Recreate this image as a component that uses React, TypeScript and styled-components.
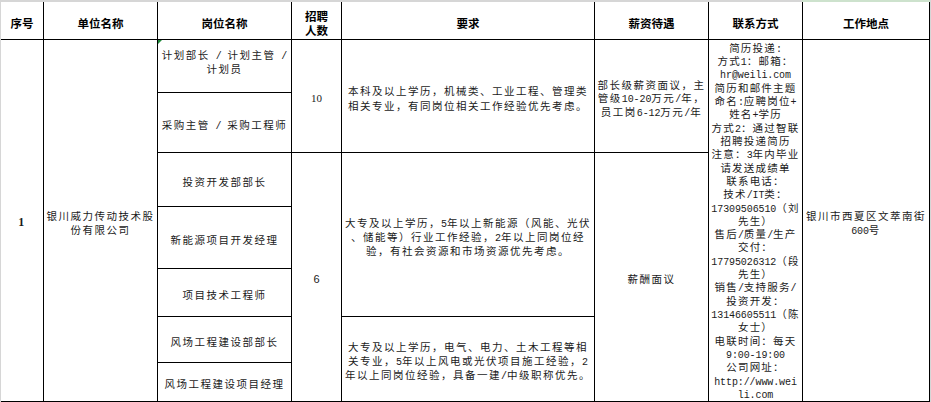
import React from 'react';
import styled, { createGlobalStyle } from 'styled-components';

const jobs: string[][] = [
  ['计划部长 / 计划主管 /', '计划员'],
  ['采购主管 / 采购工程师'],
  ['投资开发部部长'],
  ['新能源项目开发经理'],
  ['项目技术工程师'],
  ['风场工程建设部部长'],
  ['风场工程建设项目经理']
];

const contact = [
  '简历投递:',
  '方式1：邮箱：',
  'hr@weili.com',
  '简历和邮件主题',
  '命名:应聘岗位+',
  '姓名+学历',
  '方式2：通过智联',
  '招聘投递简历',
  '注意：3年内毕业',
  '请发送成绩单',
  '联系电话：',
  '技术/IT类：',
  '17309506510（刘',
  '先生）',
  '售后/质量/生产',
  '交付：',
  '17795026312（段',
  '先生）',
  '销售/支持服务/',
  '投资开发：',
  '13146605511（陈',
  '女士）',
  '电联时间：每天',
  '9:00-19:00',
  '公司网址：',
  'http://www.wei',
  'li.com'
];

// ascii runs get the narrow mono face, like the half-width latin of the sheet font
const Mixed = ({ text }: { text: string }) => (
  <>
    {text.split(/([\x20-\x7e]+)/).map((part, i) =>
      /^[\x20-\x7e]+$/.test(part) ? <Latin key={i}>{part}</Latin> : part
    )}
  </>
);

const Lines = ({ lines, lh = 14 }: { lines: string[]; lh?: number }) => (
  <>
    {lines.map((line, i) => (
      <Line key={i} $lh={lh}>
        <Mixed text={line} />
      </Line>
    ))}
  </>
);

const App = () => {
  return (
    <Frame>
      <GlobalStyle />
      <TopStrip />
      <Sheet>
        <HeadCell $col={1}>序号</HeadCell>
        <HeadCell $col={2}>单位名称</HeadCell>
        <HeadCell $col={3}>岗位名称</HeadCell>
        <HeadCell $col={4}>
          <HeadLine>招聘</HeadLine>
          <HeadLine>人数</HeadLine>
        </HeadCell>
        <HeadCell $col={5}>要求</HeadCell>
        <HeadCell $col={6}>薪资待遇</HeadCell>
        <HeadCell $col={7}>联系方式</HeadCell>
        <HeadCell $col={8}>工作地点</HeadCell>

        <Cell $col={1} $row="2 / 9">
          <Index>1</Index>
        </Cell>
        <Cell $col={2} $row="2 / 9">
          <Lines lines={['银川威力传动技术股', '份有限公司']} />
        </Cell>

        {jobs.map((title, i) => (
          <Cell key={i} $col={3} $row={`${i + 2}`} $top={i === 0}>
            {i === 0 && <Flag />}
            <Lines lines={title} />
          </Cell>
        ))}

        <Cell $col={4} $row="2 / 4">
          <Count $serif>10</Count>
        </Cell>
        <Cell $col={4} $row="4 / 9">
          <Count>6</Count>
        </Cell>

        <Cell $col={5} $row="2 / 4">
          <Lines
            lh={15}
            lines={[
              '本科及以上学历，机械类、工业工程、管理类',
              '相关专业，有同岗位相关工作经验优先考虑。'
            ]}
          />
        </Cell>
        <Cell $col={5} $row="4 / 7">
          <Lines
            lines={[
              '大专及以上学历，5年以上新能源（风能、光伏',
              '、储能等）行业工作经验，2年以上同岗位经',
              '验，有社会资源和市场资源优先考虑。'
            ]}
          />
        </Cell>
        <Cell $col={5} $row="7 / 9">
          <Lines
            lines={[
              '大专及以上学历，电气、电力、土木工程等相',
              '关专业，5年以上风电或光伏项目施工经验，2',
              '年以上同岗位经验，具备一建/中级职称优先。'
            ]}
          />
        </Cell>

        <Cell $col={6} $row="2 / 4">
          <Lines
            lh={13.3}
            lines={['部长级薪资面议，主', '管级10-20万元/年，', '员工岗6-12万元/年']}
          />
        </Cell>
        <Cell $col={6} $row="4 / 9">
          <Lines lines={['薪酬面议']} />
        </Cell>

        <Cell $col={7} $row="2 / 9" $ls={1.2} $pad={0}>
          <Lines lh={13.33} lines={contact} />
        </Cell>
        <Cell $col={8} $row="2 / 9">
          <Lines lines={['银川市西夏区文萃南街', '600号']} />
        </Cell>
      </Sheet>
    </Frame>
  );
};

export default App;

const GlobalStyle = createGlobalStyle`
  body {
    margin: 0;
    background: #fff;
  }
`;

const Frame = styled.div`
  width: 931px;
  height: 402px;
  box-sizing: border-box;
  border-left: 1px solid #d6d6d6;
  border-right: 1px solid #d6d6d6;
  display: flex;
  flex-direction: column;
  overflow: hidden;
`;

const TopStrip = styled.div`
  height: 2px;
  flex-shrink: 0;
  background: linear-gradient(to right, #d6d6d6 801px, #cde2cd 801px);
`;

const Sheet = styled.div`
  display: grid;
  grid-template-columns: 42px 113px 133px 49px 252px 113px 93px 126px;
  grid-template-rows: 37px 52px 59px 53px 61px 47px 45px 38px;
  gap: 1px;
  padding: 0 1px 1px 0;
  background: #000;
  width: fit-content;
`;

const HeadCell = styled.div<{ $col: number }>`
  grid-column: ${(p) => p.$col};
  grid-row: 1;
  background: #fff;
  display: flex;
  flex-direction: column;
  align-items: center;
  justify-content: center;
  padding-top: 4px;
  box-sizing: border-box;
  font-family: 'Noto Sans CJK SC', sans-serif;
  font-weight: 700;
  font-size: 11.5px;
  line-height: 14px;
  color: #000;
`;

const HeadLine = styled.div`
  height: 14px;
  line-height: 14px;
`;

const Cell = styled.div<{
  $col: number;
  $row: string;
  $top?: boolean;
  $ls?: number;
  $pad?: number;
}>`
  grid-column: ${(p) => p.$col};
  grid-row: ${(p) => p.$row};
  position: relative;
  background: #fff;
  display: flex;
  flex-direction: column;
  align-items: center;
  justify-content: ${(p) => (p.$top ? 'flex-start' : 'center')};
  padding-top: ${(p) => (p.$top ? 8 : p.$pad ?? 4)}px;
  box-sizing: border-box;
  font-family: 'Noto Sans CJK SC', sans-serif;
  font-size: 10.5px;
  letter-spacing: ${(p) => p.$ls ?? 1.5}px;
  color: #1a1a1a;
`;

const Line = styled.div<{ $lh: number }>`
  flex-shrink: 0;
  height: ${(p) => p.$lh}px;
  line-height: ${(p) => p.$lh}px;
  white-space: nowrap;
  text-align: center;
`;

const Latin = styled.span`
  font-family: 'Liberation Mono', monospace;
  font-size: 10px;
  line-height: 1;
  letter-spacing: -0.1px;
`;

const Index = styled.span`
  font-family: 'Liberation Serif', serif;
  font-weight: 700;
  font-size: 12px;
`;

const Count = styled.span<{ $serif?: boolean }>`
  font-family: ${(p) =>
    p.$serif ? "'Liberation Serif', serif" : "'Liberation Sans', sans-serif"};
  font-size: 11px;
  letter-spacing: 0;
`;

const Flag = styled.span`
  position: absolute;
  top: 0;
  left: 0;
  border-top: 4px solid #1f8a3a;
  border-right: 4px solid transparent;
`;
